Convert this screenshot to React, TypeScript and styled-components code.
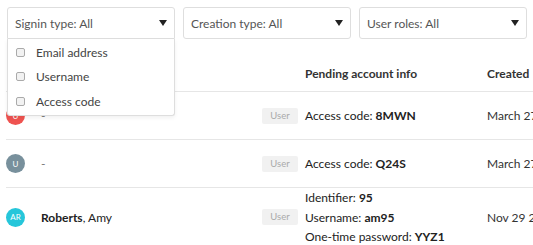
import React from 'react';
import styled, { createGlobalStyle } from 'styled-components';

const GlobalStyle = createGlobalStyle`
    html, body {
        margin: 0;
        padding: 0;
        background: #ffffff;
        overflow: hidden;
    }
    body {
        font-family: Lato, "Open Sans", "Liberation Sans", sans-serif;
        color: #333333;
    }
`

type Row = {
    initials: string,
    color: string,
    last?: string,
    first?: string,
    info: [string, string][],
    created: string,
}

const rows: Row[] = [
    { initials: 'U', color: '#ef5350', info: [['Access code', '8MWN']], created: 'March 27, 2019' },
    { initials: 'U', color: '#78909c', info: [['Access code', 'Q24S']], created: 'March 27, 2019' },
    {
        initials: 'AR', color: '#26c6da', last: 'Roberts', first: 'Amy',
        info: [['Identifier', '95'], ['Username', 'am95'], ['One-time password', 'YYZ1']],
        created: 'Nov 29 2018',
    },
]

const Page = styled.div`
    width: 560px;
    padding: 7px 0 0 6px;
`

const FilterBar = styled.div`
    display: flex;
    gap: 8px;
    padding-left: 1px;
`

const SelectWrap = styled.div`
    position: relative;
    width: 168px;
`

const Select = styled.div<{ open?: boolean }>`
    display: flex;
    align-items: center;
    justify-content: space-between;
    box-sizing: border-box;
    height: 32px;
    padding: 0 7px 0 7px;
    border: 1px solid #dedede;
    border-radius: ${p => p.open ? '3px 3px 0 0' : '3px'};
    background: #fff;
    font-size: 12px;
    color: #555;
`

const Caret = styled.span`
    width: 0;
    height: 0;
    border-left: 4.5px solid transparent;
    border-right: 4.5px solid transparent;
    border-top: 6px solid #222;
`

const Menu = styled.div`
    position: absolute;
    top: 32px;
    left: 0;
    right: 0;
    box-sizing: border-box;
    padding: 1px 0 1px;
    background: #fff;
    border: 1px solid #dedede;
    border-top: none;
    border-radius: 0 0 3px 3px;
    box-shadow: 0 2px 4px rgba(0, 0, 0, 0.06);
    z-index: 2;
`

const MenuItem = styled.div`
    display: flex;
    align-items: center;
    height: 24.5px;
    padding-left: 8px;
    font-size: 12px;
    color: #444;
`

const Check = styled.span`
    width: 7px;
    height: 7px;
    margin-right: 11px;
    border: 1px solid #aaa;
    border-radius: 2px;
    background: #f2f2f2;
`

const Table = styled.div`
    margin-top: 17px;
`

const Grid = styled.div`
    display: grid;
    grid-template-columns: 35px 221px 43px 182px 1fr;
    align-items: center;
`

const HeaderRow = styled(Grid)`
    height: 35px;
    font-size: 12px;
    font-weight: 700;
    color: #333;
`

const BodyRow = styled(Grid)`
    min-height: 47px;
    border-top: 1px solid #e6e6e6;
    font-size: 12px;
`

const Avatar = styled.div<{ bg: string }>`
    width: 19px;
    height: 19px;
    border-radius: 50%;
    background: ${p => p.bg};
    color: #fff;
    font-size: 8px;
    display: flex;
    align-items: center;
    justify-content: center;
`

const Name = styled.div`
    font-size: 12px;
    color: #222;
`

const Dash = styled.span`
    color: #777;
`

const Badge = styled.span`
    justify-self: start;
    width: 36px;
    height: 16px;
    line-height: 16px;
    text-align: center;
    border-radius: 2px;
    background: #f1f1f1;
    color: #aaa;
    font-size: 9.5px;
`

const Info = styled.div`
    line-height: 19.5px;
    color: #222;
`

const Created = styled.div`
    color: #333;
    white-space: nowrap;
`

const filters = ['Signin type: All', 'Creation type: All', 'User roles: All']

const App = () => {
    return (
        <Page>
            <GlobalStyle />
            <FilterBar>
                {filters.map((f, i) => (
                    <SelectWrap key={f}>
                        <Select open={i === 0}>
                            <span>{f}</span>
                            <Caret />
                        </Select>
                        {i === 0 &&
                            <Menu>
                                {['Email address', 'Username', 'Access code'].map(o => (
                                    <MenuItem key={o}><Check />{o}</MenuItem>
                                ))}
                            </Menu>
                        }
                    </SelectWrap>
                ))}
            </FilterBar>
            <Table>
                <HeaderRow>
                    <span />
                    <span />
                    <span />
                    <span>Pending account info</span>
                    <span>Created</span>
                </HeaderRow>
                {rows.map((r, i) => (
                    <BodyRow key={i}>
                        <Avatar bg={r.color}>{r.initials}</Avatar>
                        <Name>
                            {r.last ? <><b>{r.last}</b>, {r.first}</> : <Dash>-</Dash>}
                        </Name>
                        <Badge>User</Badge>
                        <Info>
                            {r.info.map(([k, v]) => (
                                <div key={k}>{k}: <b>{v}</b></div>
                            ))}
                        </Info>
                        <Created>{r.created}</Created>
                    </BodyRow>
                ))}
            </Table>
        </Page>
    )
}

export default App;
